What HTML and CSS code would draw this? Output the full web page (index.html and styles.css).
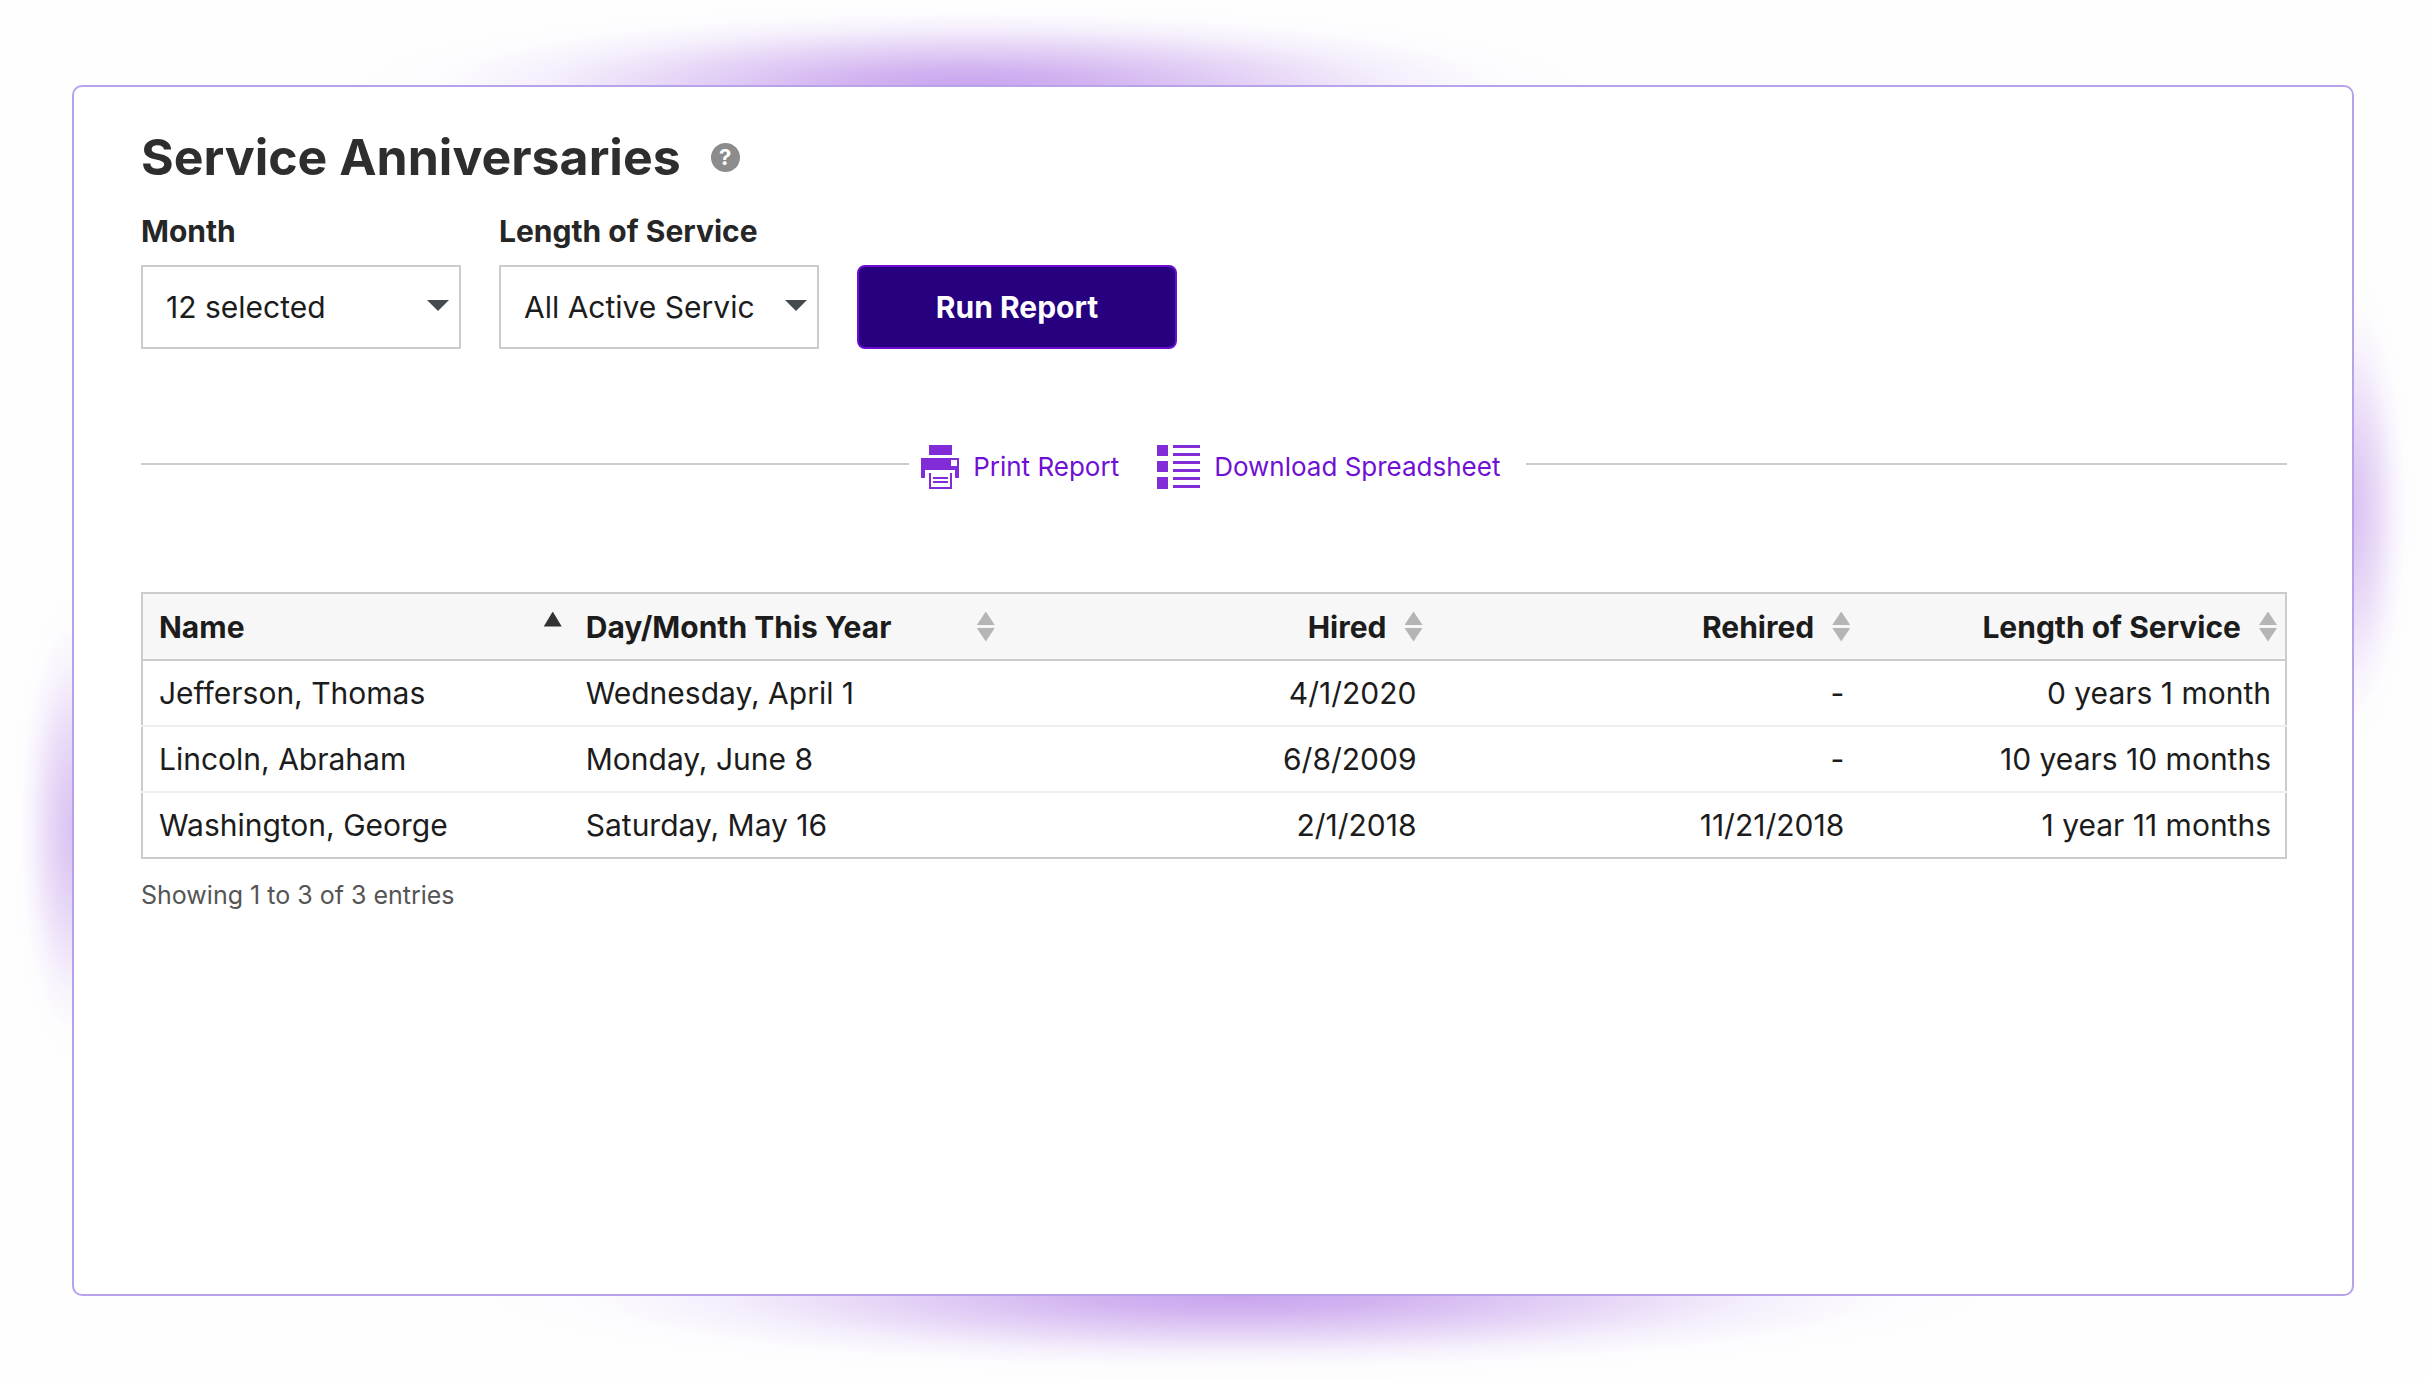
FILE: index.html
```html
<!DOCTYPE html>
<html lang="en">
  <head>
    <meta charset="UTF-8" />
    <meta name="viewport" content="width=device-width, initial-scale=1.0" />
    <title>Service Anniversaries</title>
    <link rel="stylesheet" href="styles.css">
  </head>
  <body>
    <main class="panel">
      <div class="title-row">
        <h1>Service Anniversaries</h1>
        <button type="button" class="help" aria-label="Help">?</button>
      </div>

      <form class="filters">
        <div class="field">
          <label for="month">Month</label>
          <div class="select-wrap">
            <select id="month">
              <option selected>12 selected</option>
            </select>
          </div>
        </div>
        <div class="field">
          <label for="length">Length of Service</label>
          <div class="select-wrap">
            <select id="length">
              <option selected>All Active Servic</option>
            </select>
          </div>
        </div>
        <button type="button" class="run-btn">Run Report</button>
      </form>

      <div class="actions">
        <a href="#print">
          <svg width="38" height="44" viewBox="0 0 38 44" fill="currentColor" aria-hidden="true">
            <rect x="8" y="0" width="23" height="10" />
            <path fill-rule="evenodd" d="M0 13h38v20h-4v-8H4v8H0zM30 15v6h6v-6z" />
            <path d="M8 28h2v14h19V28h2v16H8z" />
            <rect x="12" y="32" width="15" height="2" />
            <rect x="12" y="36" width="15" height="2" />
          </svg>
          Print Report
        </a>
        <a href="#download">
          <svg width="43" height="44" viewBox="0 0 43 44" fill="currentColor" aria-hidden="true">
            <path d="M0 0h11v11H0zM0 16h11v11H0zM0 32h11v12H0z" />
            <path d="M16 0h27v3H16zM16 8h27v3H16zM16 16h27v3H16zM16 24h27v3H16zM16 32h27v3H16zM16 40h27v3H16z" />
          </svg>
          Download Spreadsheet
        </a>
      </div>

      <table>
        <thead>
          <tr>
            <th aria-sort="ascending"><button type="button" class="sort asc">Name</button></th>
            <th><button type="button" class="sort">Day/Month This Year</button></th>
            <th class="num"><button type="button" class="sort">Hired</button></th>
            <th class="num"><button type="button" class="sort">Rehired</button></th>
            <th class="num"><button type="button" class="sort">Length of Service</button></th>
          </tr>
        </thead>
        <tbody>
          <tr>
            <td>Jefferson, Thomas</td>
            <td>Wednesday, April 1</td>
            <td class="num">4/1/2020</td>
            <td class="num">-</td>
            <td class="num">0 years 1 month</td>
          </tr>
          <tr>
            <td>Lincoln, Abraham</td>
            <td>Monday, June 8</td>
            <td class="num">6/8/2009</td>
            <td class="num">-</td>
            <td class="num">10 years 10 months</td>
          </tr>
          <tr>
            <td>Washington, George</td>
            <td>Saturday, May 16</td>
            <td class="num">2/1/2018</td>
            <td class="num">11/21/2018</td>
            <td class="num">1 year 11 months</td>
          </tr>
        </tbody>
      </table>
      <p class="info">Showing 1 to 3 of 3 entries</p>
    </main>
  </body>
</html>
```

FILE: styles.css
```css
* {
  box-sizing: border-box;
}
/* soft purple glow behind each side of the panel */
body {
  --glow: #c9a4ef 0%, #d2b3f0 20%, #e4d2f6 45%, #f5effc 68%, #fcfbfe 85%, transparent 100%;
  --glow-side: #dac2f3 0%, #e0cdf4 20%, #ecdff8 45%, #f8f3fd 68%, #fdfcfe 85%, transparent 100%;
  margin: 0;
  min-height: 100vh;
  padding: 85px 72px;
  display: flex;
  font-family: Inter, "Liberation Sans", sans-serif;
  font-size: 30px;
  line-height: 36px;
  color: #1c1c1c;
  background-color: #fefefe;
  background-image:
    radial-gradient(620px 84px at 40% 86px, var(--glow)),
    radial-gradient(760px 84px at 51% calc(100% - 86px), var(--glow)),
    radial-gradient(62px 240px at 73px 60%, var(--glow-side)),
    radial-gradient(62px 240px at calc(100% - 73px) 37%, var(--glow-side));
}
button,
select {
  font: inherit;
  color: inherit;
}
.panel {
  flex: 1;
  padding: 44px 65px 44px 67px;
  background-color: #fff;
  border: 2px solid #b8a3ea;
  border-radius: 10px;
}
.title-row {
  display: flex;
  align-items: center;
  gap: 30px;
}
h1 {
  margin: 0;
  font-size: 50px;
  line-height: 52px;
  font-weight: 700;
  color: #2e2e2e;
}
.help {
  width: 29px;
  height: 29px;
  padding: 0;
  border: none;
  border-radius: 50%;
  background-color: #8c8c8c;
  color: #fff;
  font-size: 22px;
  line-height: 28px;
  font-weight: 700;
}
.filters {
  display: flex;
  align-items: flex-end;
  gap: 38px;
  margin-top: 30px;
}
.field {
  display: flex;
  flex-direction: column;
  gap: 16px;
  width: 320px;
}
label {
  font-weight: 700;
  color: #262626;
}
.select-wrap {
  position: relative;
}
.select-wrap::after {
  content: "";
  position: absolute;
  right: 12px;
  top: 35px;
  border: 11px solid transparent;
  border-top-color: #444b4f;
  border-bottom: none;
  pointer-events: none;
}
select {
  appearance: none;
  width: 100%;
  height: 84px;
  padding: 0 44px 0 23px;
  border: 2px solid #ccc;
  border-radius: 0;
  background-color: #fff;
}
.run-btn {
  width: 320px;
  height: 84px;
  border: 2px solid #6a0dd0;
  border-radius: 8px;
  background-color: #270080;
  color: #fff;
  font-weight: 700;
}
.actions {
  display: flex;
  justify-content: center;
  align-items: center;
  margin-top: 96px;
}
.actions::before,
.actions::after {
  content: "";
  flex: 1;
  height: 2px;
  margin-bottom: 6px;
  background-color: #ccc;
}
.actions::before {
  flex-grow: 1.01;
}
.actions a {
  display: flex;
  align-items: center;
  gap: 14px;
  padding: 0 26px 0 12px;
  font-size: 26px;
  color: #6f10d4;
  text-decoration: none;
}
.actions svg {
  color: #822cd8;
}
table {
  width: 100%;
  margin-top: 103px;
  table-layout: fixed;
  border-collapse: collapse;
  border: 2px solid #ccc;
}
th {
  height: 67px;
  padding: 0 8px 0 16px;
  background-color: #f7f7f7;
  border-bottom: 2px solid #ccc;
}
th:nth-child(2) {
  width: 20.2%;
}
td {
  height: 66px;
  padding: 0 14px 0 16px;
  border-bottom: 2px solid #eee;
}
tbody tr:last-child td {
  border-bottom-color: #ccc;
}
.num {
  text-align: right;
}
.sort {
  display: flex;
  align-items: center;
  justify-content: space-between;
  gap: 18px;
  width: 100%;
  padding: 0;
  border: none;
  background: none;
  font-weight: 700;
  white-space: nowrap;
}
.num .sort {
  justify-content: flex-end;
}
.sort::after {
  content: "";
  width: 18px;
  height: 30px;
  background-color: #b5b5b5;
  clip-path: polygon(50% 0, 100% 45%, 0 45%, 0 55%, 100% 55%, 50% 100%, 0 55%, 0 45%);
}
.sort.asc::after {
  background-color: #333;
  clip-path: polygon(50% 0, 100% 50%, 0 50%);
}
.info {
  margin: 18px 0 0;
  font-size: 25px;
  color: #555;
}
```
